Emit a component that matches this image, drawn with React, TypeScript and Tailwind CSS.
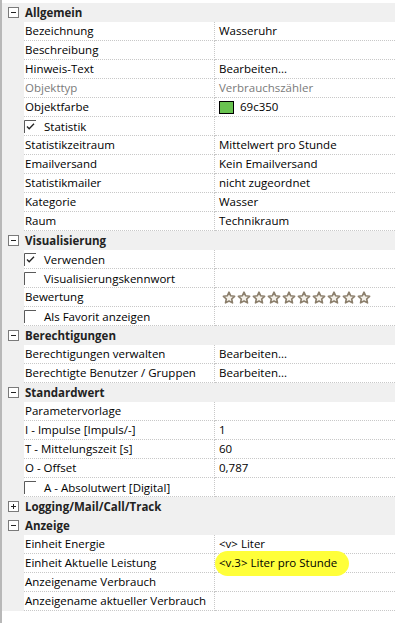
import React from "react";

type Row =
  | { kind: "cat"; label: string; open: boolean }
  | { kind: "prop"; label: string; value?: React.ReactNode; disabled?: boolean; mark?: boolean }
  | { kind: "check"; label: string; checked: boolean };

const rows: Row[] = [
  { kind: "cat", label: "Allgemein", open: true },
  { kind: "prop", label: "Bezeichnung", value: "Wasseruhr" },
  { kind: "prop", label: "Beschreibung" },
  { kind: "prop", label: "Hinweis-Text", value: "Bearbeiten..." },
  { kind: "prop", label: "Objekttyp", value: "Verbrauchszähler", disabled: true },
  { kind: "prop", label: "Objektfarbe", value: "color" },
  { kind: "check", label: "Statistik", checked: true },
  { kind: "prop", label: "Statistikzeitraum", value: "Mittelwert pro Stunde" },
  { kind: "prop", label: "Emailversand", value: "Kein Emailversand" },
  { kind: "prop", label: "Statistikmailer", value: "nicht zugeordnet" },
  { kind: "prop", label: "Kategorie", value: "Wasser" },
  { kind: "prop", label: "Raum", value: "Technikraum" },
  { kind: "cat", label: "Visualisierung", open: true },
  { kind: "check", label: "Verwenden", checked: true },
  { kind: "check", label: "Visualisierungskennwort", checked: false },
  { kind: "prop", label: "Bewertung", value: "stars" },
  { kind: "check", label: "Als Favorit anzeigen", checked: false },
  { kind: "cat", label: "Berechtigungen", open: true },
  { kind: "prop", label: "Berechtigungen verwalten", value: "Bearbeiten..." },
  { kind: "prop", label: "Berechtigte Benutzer / Gruppen", value: "Bearbeiten..." },
  { kind: "cat", label: "Standardwert", open: true },
  { kind: "prop", label: "Parametervorlage" },
  { kind: "prop", label: "I - Impulse [Impuls/-]", value: "1" },
  { kind: "prop", label: "T - Mittelungszeit [s]", value: "60" },
  { kind: "prop", label: "O - Offset", value: "0,787" },
  { kind: "check", label: "A - Absolutwert [Digital]", checked: false },
  { kind: "cat", label: "Logging/Mail/Call/Track", open: false },
  { kind: "cat", label: "Anzeige", open: true },
  { kind: "prop", label: "Einheit Energie", value: "<v> Liter" },
  { kind: "prop", label: "Einheit Aktuelle Leistung", value: "<v.3> Liter pro Stunde", mark: true },
  { kind: "prop", label: "Anzeigename Verbrauch" },
  { kind: "prop", label: "Anzeigename aktueller Verbrauch" },
];

const Toggle = ({ open }: { open: boolean }) => (
  <svg width="11" height="11" viewBox="0 0 11 11" className="shrink-0">
    <rect x="0.5" y="0.5" width="10" height="10" fill="white" stroke="#7a7a7a" />
    <path d="M3 5.5h5" stroke="#222" strokeWidth="1" />
    {!open && <path d="M5.5 3v5" stroke="#222" strokeWidth="1" />}
  </svg>
);

const Box = ({ checked }: { checked: boolean }) => (
  <svg width="12" height="13" viewBox="0 0 12 13" className="shrink-0">
    <path d="M0.5 13V0.5H12" fill="none" stroke="#5a5a5a" />
    {checked && <path d="M3 6.5l2.2 2.3L10 3.8" fill="none" stroke="#222" strokeWidth="1.3" />}
  </svg>
);

const Star = () => (
  <svg width="14" height="14" viewBox="0 0 14 14">
    <path
      d="M7 1.2l1.7 3.6 3.9.5-2.9 2.7.8 3.9L7 10l-3.5 1.9.8-3.9L1.4 5.3l3.9-.5z"
      fill="#f4f1ea"
      stroke="#8c7f6c"
      strokeWidth="1.6"
      strokeLinejoin="round"
    />
  </svg>
);

const Value = ({ row }: { row: Extract<Row, { kind: "prop" }> }) => {
  if (row.value === "color")
    return (
      <div className="flex items-center gap-[6px]">
        <span className="w-[15px] h-[13px] bg-[#69c350] border border-black" />
        <span>69c350</span>
      </div>
    );
  if (row.value === "stars")
    return (
      <div className="flex items-center gap-[1px] pl-[3px] pt-[2px]">
        {Array.from({ length: 10 }).map((_, i) => (
          <Star key={i} />
        ))}
      </div>
    );
  if (row.mark)
    return (
      <span className="relative">
        <span className="absolute -left-[4px] -right-[12px] -top-[6px] -bottom-[7px] rounded-[14px] bg-[#ffff3a]" />
        <span className="relative">{row.value}</span>
      </span>
    );
  return <span className={row.disabled ? "text-[#7a7a7a]" : ""}>{row.value}</span>;
};

export default function App() {
  return (
    <div
      className="w-[397px] h-[623px] bg-white text-[11.5px] text-black leading-none border-l-2 border-[#b8b8b8] pt-[3px] overflow-hidden"
      style={{ fontFamily: '"Open Sans", "Noto Sans", sans-serif' }}
    >
      <div className="w-[393px] bg-[#f0f0f0]">
        {rows.map((row, i) => {
          if (row.kind === "cat")
            return (
              <div key={i} className="flex items-center h-[19px] bg-[#f0f0f0]">
                <div className="w-[23px] flex justify-center">
                  <Toggle open={row.open} />
                </div>
                <span className="font-bold text-[#222]">{row.label}</span>
              </div>
            );
          return (
            <div key={i} className="flex h-[19px]">
              <div className="w-[22px] shrink-0" />
              <div className="w-[191px] shrink-0 flex items-center bg-white border-b border-r border-dotted border-[#c8c8c8] whitespace-nowrap overflow-hidden">
                {row.kind === "check" ? (
                  <div className="flex items-end gap-[8px]">
                    <Box checked={row.checked} />
                    <span>{row.label}</span>
                  </div>
                ) : (
                  <span className={row.kind === "prop" && row.disabled ? "pl-[1px] text-[#7a7a7a]" : "pl-[1px]"}>
                    {row.label}
                  </span>
                )}
              </div>
              <div className="flex-1 flex items-center pl-[4px] bg-white border-b border-dotted border-[#c8c8c8] whitespace-nowrap">
                {row.kind === "prop" && <Value row={row} />}
              </div>
            </div>
          );
        })}
      </div>
    </div>
  );
}
